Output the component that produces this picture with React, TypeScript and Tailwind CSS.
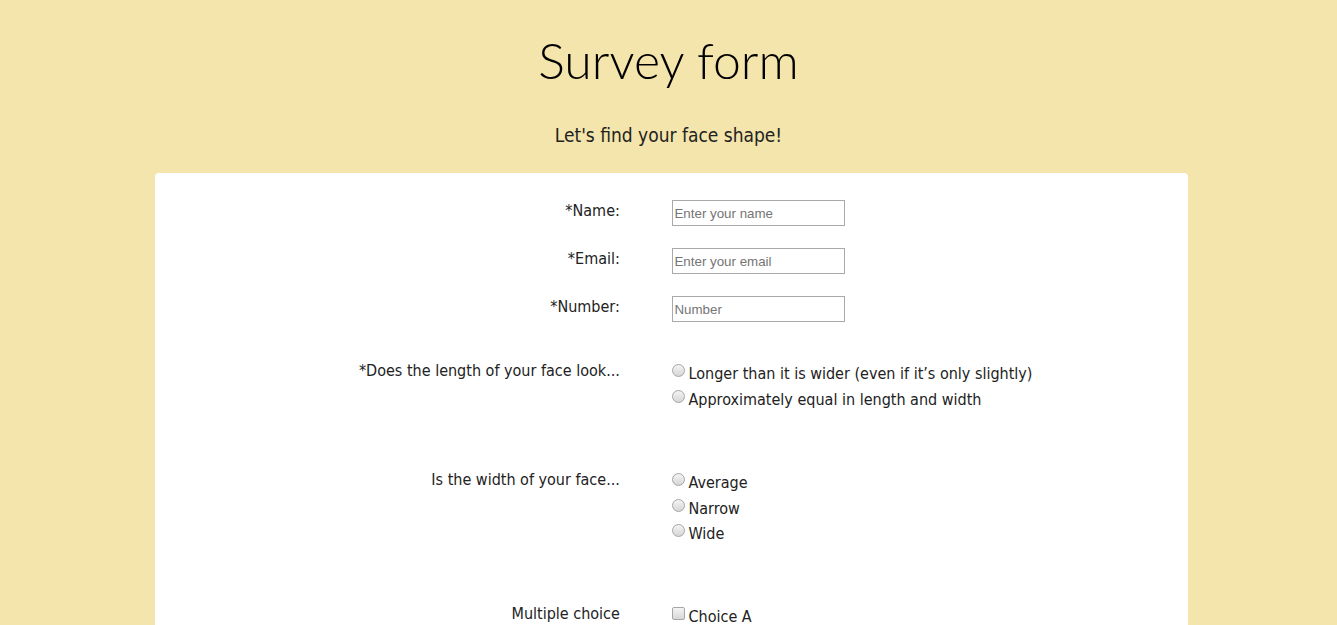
const labelFont = { fontFamily: '"Liberation Sans Narrow", "DejaVu Sans Condensed", "Roboto", sans-serif' }

function TextRow({ label, placeholder, type }: { label: string; placeholder: string; type: string }) {
  return (
    <div className="flex items-start">
      <label className="w-[45%] text-right text-[16px] leading-[22px] text-[#222]">{label}</label>
      <div className="ml-[5%] pl-[1px]">
        <input
          type={type}
          placeholder={placeholder}
          className="h-[26px] w-[173px] border border-[#a9a9a9] bg-white px-[1px] text-[13.33px] placeholder:text-[#757575]"
          style={{ fontFamily: '"Liberation Sans", Arial, sans-serif' }}
        />
      </div>
    </div>
  )
}

function ChoiceRow({
  label,
  name,
  options,
  type = 'radio',
}: {
  label: string
  name: string
  options: string[]
  type?: 'radio' | 'checkbox'
}) {
  const mark = type === 'radio' ? 'rounded-full' : 'rounded-[2px]'
  return (
    <div className="flex items-start">
      <p className="w-[45%] text-right text-[16px] leading-[24px] text-[#222]">{label}</p>
      <div className="ml-[5%] mt-[2px] flex flex-col pl-[1px]">
        {options.map((option) => (
          <label key={option} className="flex items-center text-[16px] leading-[25.5px] text-[#222]">
            <input
              type={type}
              name={name}
              className={`m-0 mr-[3px] h-[13px] w-[13px] shrink-0 -translate-y-[3px] appearance-none border border-[#a6a6a6] bg-gradient-to-b from-[#f4f4f4] to-[#d6d6d6] ${mark}`}
            />
            {option}
          </label>
        ))}
      </div>
    </div>
  )
}

export default function App() {
  return (
    <div className="min-h-screen bg-[#f3e5ab] pb-10" style={labelFont}>
      <header className="pt-[30px] text-center">
        <h1
          className="text-[50px] font-light leading-[60px] text-black"
          style={{ fontFamily: 'Lato, "Open Sans", sans-serif' }}
        >
          Survey form
        </h1>
        <p className="mt-[31px] text-[19px] leading-[28px] text-[#222]">Let's find your face shape!</p>
      </header>

      <form className="ml-[155px] mt-[24px] w-[1033px] rounded-[4px] bg-white pb-10 pt-[27px]">
        <div className="flex flex-col gap-[22px]">
          <TextRow label="*Name:" placeholder="Enter your name" type="text" />
          <TextRow label="*Email:" placeholder="Enter your email" type="email" />
          <TextRow label="*Number:" placeholder="Number" type="number" />
        </div>

        <div className="mt-[37px]">
          <ChoiceRow
            label="*Does the length of your face look..."
            name="length"
            options={['Longer than it is wider (even if it\u2019s only slightly)', 'Approximately equal in length and width']}
          />
        </div>

        <div className="mt-[56px]">
          <ChoiceRow label="Is the width of your face..." name="width" options={['Average', 'Narrow', 'Wide']} />
        </div>

        <div className="mt-[55px]">
          <ChoiceRow
            label="Multiple choice"
            name="multi"
            type="checkbox"
            options={['Choice A', 'Choice B', 'Choice C']}
          />
        </div>
      </form>
    </div>
  )
}
